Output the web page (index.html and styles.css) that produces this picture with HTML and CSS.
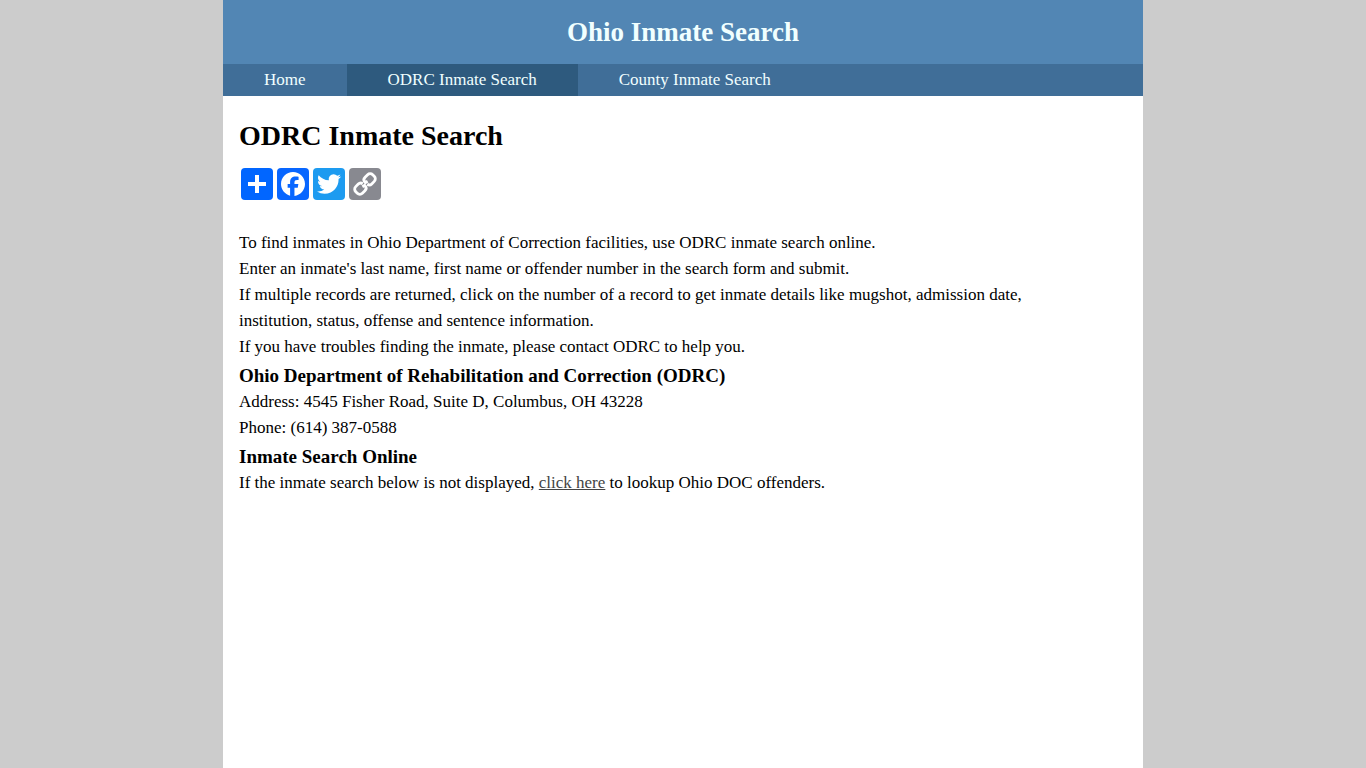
FILE: index.html
```html
<!DOCTYPE html>
<html lang="en">
<head>
    <meta charset="utf-8">
    <meta name="viewport" content="width=device-width, initial-scale=1.0">
    <title>ODRC Inmate Search</title>
    <link rel="stylesheet" href="styles.css">
</head>
<body>
    <div class="container">
        <header class="header">Ohio Inmate Search</header>
        <nav class="nav">
            <a href="#">Home</a>
            <a href="#" class="active">ODRC Inmate Search</a>
            <a href="#">County Inmate Search</a>
        </nav>
        <main class="content">
            <h1>ODRC Inmate Search</h1>
            <div class="share">
                <a href="#" class="share-more" aria-label="Share">
                    <svg viewBox="0 0 32 32"><path fill="#fff" d="M14 7h4v18h-4z"/><path fill="#fff" d="M7 14h18v4H7z"/></svg>
                </a>
                <a href="#" class="share-facebook" aria-label="Facebook">
                    <svg viewBox="0 0 32 32"><path fill="#fff" d="M28 16c0-6.627-5.373-12-12-12S4 9.373 4 16c0 5.628 3.875 10.35 9.101 11.647v-7.98h-2.474V16H13.1v-1.58c0-4.085 1.849-5.978 5.859-5.978.76 0 2.072.15 2.608.298v3.325c-.283-.03-.775-.045-1.386-.045-1.967 0-2.728.745-2.728 2.683V16h3.92l-.673 3.667h-3.247v8.245C23.395 27.195 28 22.135 28 16Z"/></svg>
                </a>
                <a href="#" class="share-twitter" aria-label="Twitter">
                    <svg viewBox="0 0 32 32"><path fill="#fff" d="M28 8.557a9.913 9.913 0 0 1-2.828.775 4.93 4.93 0 0 0 2.166-2.725 9.738 9.738 0 0 1-3.13 1.194 4.92 4.92 0 0 0-3.593-1.55 4.924 4.924 0 0 0-4.794 6.049c-4.09-.21-7.72-2.17-10.15-5.15a4.942 4.942 0 0 0-.665 2.477c0 1.71.87 3.214 2.19 4.1a4.968 4.968 0 0 1-2.23-.616v.06c0 2.39 1.7 4.38 3.952 4.83-.414.115-.85.174-1.297.174-.318 0-.626-.03-.928-.086a4.935 4.935 0 0 0 4.6 3.42 9.893 9.893 0 0 1-6.114 2.107c-.398 0-.79-.023-1.175-.068a13.953 13.953 0 0 0 7.55 2.213c9.056 0 14.01-7.507 14.01-14.013 0-.213-.005-.426-.015-.637.96-.695 1.795-1.56 2.455-2.55z"/></svg>
                </a>
                <a href="#" class="share-link" aria-label="Copy Link">
                    <svg viewBox="0 0 32 32">
                        <g transform="rotate(-45 16 16)" fill="none" stroke="#fff" stroke-width="2.8">
                            <path d="M14.6 14.2c-.4-1.8-1.7-2.9-3.4-2.9H7.6a3.6 3.6 0 0 0-3.6 3.6v2.2a3.6 3.6 0 0 0 3.6 3.6h3.6c2.1 0 3.6-1.5 3.6-3.6v-.4l-2.6-.6"/>
                            <path d="M17.4 17.8c.4 1.8 1.7 2.9 3.4 2.9h3.6a3.6 3.6 0 0 0 3.6-3.6v-2.2a3.6 3.6 0 0 0-3.6-3.6h-3.6c-2.1 0-3.6 1.5-3.6 3.6v.4l2.6.6"/>
                        </g>
                    </svg>
                </a>
            </div>
            <p>To find inmates in Ohio Department of Correction facilities, use ODRC inmate search online.<br>
            Enter an inmate's last name, first name or offender number in the search form and submit.<br>
            If multiple records are returned, click on the number of a record to get inmate details like mugshot, admission date, institution, status, offense and sentence information.<br>
            If you have troubles finding the inmate, please contact ODRC to help you.</p>
            <h2>Ohio Department of Rehabilitation and Correction (ODRC)</h2>
            <p>Address: 4545 Fisher Road, Suite D, Columbus, OH 43228<br>
            Phone: (614) 387-0588</p>
            <h2>Inmate Search Online</h2>
            <p>If the inmate search below is not displayed, <a href="#">click here</a> to lookup Ohio DOC offenders.</p>
        </main>
    </div>
</body>
</html>
```
FILE: styles.css
```css
body {
    margin: 0;
    background: #ccc;
    color: #000;
    font-family: Georgia, "Liberation Serif", serif;
    font-size: 17px;
    line-height: 26px;
}
.container {
    max-width: 920px;
    min-height: 100vh;
    margin: 0 auto;
    background: #fff;
}
.header {
    padding: 16px;
    background: #5286b4;
    color: azure;
    font-size: 27px;
    font-weight: bold;
    line-height: 32px;
    text-align: center;
}
.nav {
    display: flex;
    flex-wrap: wrap;
    background: #406e98;
}
.nav a {
    padding: 0 41px;
    color: azure;
    line-height: 32px;
    text-decoration: none;
}
.nav a.active {
    background: #2e5a7e;
}
.content {
    padding: 24px 16px;
}
h1 {
    margin: 0 0 16px;
    font-size: 28px;
    line-height: 32px;
}
.share {
    display: flex;
    gap: 4px;
    margin: 0 2px 30px;
}
.share a {
    width: 32px;
    height: 32px;
    border-radius: 4px;
}
.share svg {
    display: block;
}
.share-more {
    background: #0166ff;
}
.share-facebook {
    background: #0866ff;
}
.share-twitter {
    background: #1d9bf0;
}
.share-link {
    background: #888990;
}
h2 {
    margin: 3px 0 0;
    font-size: 19px;
    line-height: 26px;
}
p {
    max-width: 840px;
    margin: 0;
}
p a {
    color: #444;
}
```
